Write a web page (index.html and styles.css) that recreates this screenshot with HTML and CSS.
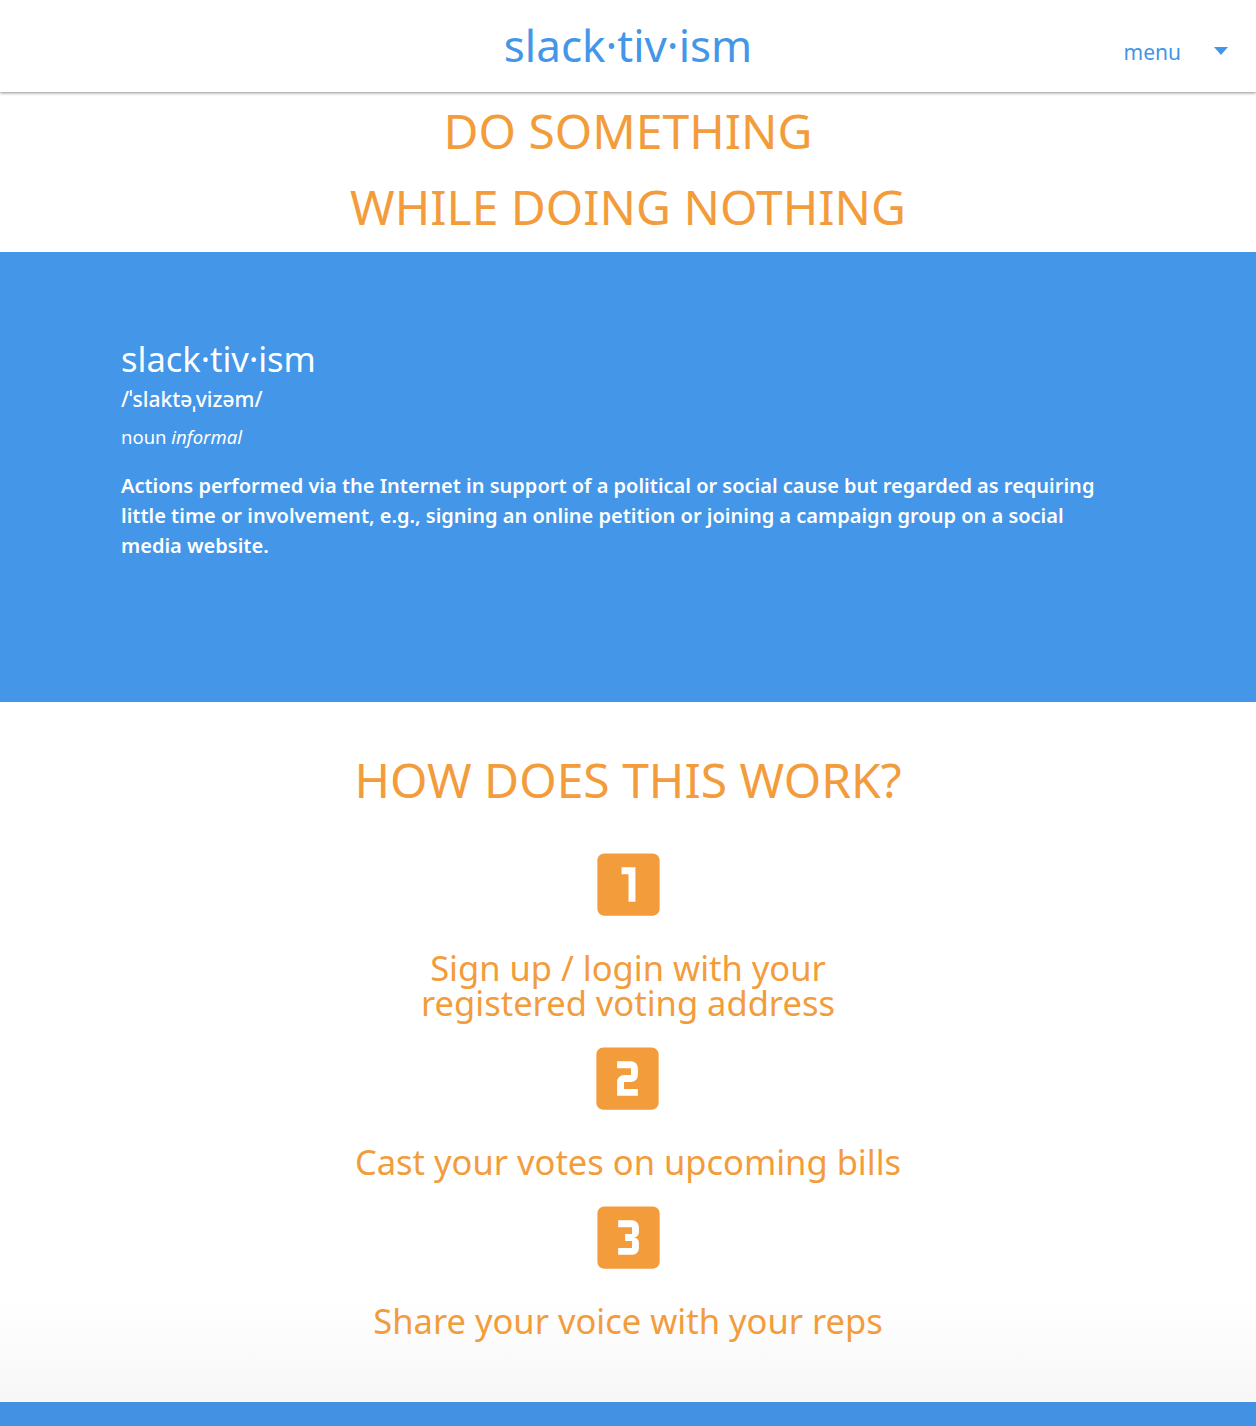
FILE: index.html
```html
<!DOCTYPE html>
<html lang="en">
<head>
<meta charset="utf-8">
<title>slacktivism</title>
<link rel="stylesheet" href="styles.css">
</head>
<body>
<header class="topbar">
  <div class="topbar-spacer"></div>
  <div class="logo">slack·tiv·ism</div>
  <div class="menu">
    <span class="menu-label">menu</span>
    <svg class="menu-caret" width="14" height="8" viewBox="0 0 14 8"><path d="M0 0h14L7 8z" fill="#4396e8"/></svg>
  </div>
</header>

<section class="hero">
  <h1 class="hero-title">DO SOMETHING<br>WHILE DOING NOTHING</h1>
</section>

<section class="definition">
  <div class="definition-inner">
    <h2 class="def-word">slack·tiv·ism</h2>
    <p class="def-pron">/ˈslaktəˌvizəm/</p>
    <p class="def-pos">noun <em>informal</em></p>
    <p class="def-text">Actions performed via the Internet in support of a political or social cause but regarded as requiring little time or involvement, e.g., signing an online petition or joining a campaign group on a social media website.</p>
  </div>
</section>

<section class="how">
  <h2 class="how-title">HOW DOES THIS WORK?</h2>
  <div class="step">
    <svg class="step-icon" viewBox="0 0 24 24"><path fill="#f39c3b" d="M19 3H5c-1.1 0-2 .9-2 2v14c0 1.1.9 2 2 2h14c1.1 0 2-.9 2-2V5c0-1.1-.9-2-2-2zm-5 14h-2V9h-2V7h4v10z"/></svg>
    <p class="step-text">Sign up / login with your<br>registered voting address</p>
  </div>
  <div class="step">
    <svg class="step-icon" viewBox="0 0 24 24"><path fill="#f39c3b" d="M19 3H5c-1.1 0-2 .9-2 2v14c0 1.1.9 2 2 2h14c1.1 0 2-.9 2-2V5c0-1.1-.9-2-2-2zm-4 8c0 1.11-.9 2-2 2h-2v2h4v2H9v-4c0-1.110.9-2 2-2h2V9H9V7h4c1.1 0 2 .89 2 2v2z"/></svg>
    <p class="step-text">Cast your votes on upcoming bills</p>
  </div>
  <div class="step">
    <svg class="step-icon" viewBox="0 0 24 24"><path fill="#f39c3b" d="M19.01 3h-14c-1.1 0-2 .9-2 2v14c0 1.1.9 2 2 2h14c1.1 0 2-.9 2-2V5c0-1.1-.9-2-2-2zm-4 7.5c0 .83-.67 1.5-1.5 1.5.83 0 1.5.67 1.5 1.5V15c0 1.11-.9 2-2 2h-4v-2h4v-2h-2v-2h2V9h-4V7h4c1.1 0 2 .89 2 2v1.5z"/></svg>
    <p class="step-text">Share your voice with your reps</p>
  </div>
</section>

<footer class="footer"></footer>
</body>
</html>
```

FILE: styles.css
```css
* { box-sizing: border-box; }
html, body { margin: 0; padding: 0; }
body {
  font-family: "Noto Sans", "Open Sans", "DejaVu Sans", sans-serif;
  background: #fff;
}
.topbar {
  position: relative;
  z-index: 2;
  height: 92px;
  display: grid;
  grid-template-columns: 1fr auto 1fr;
  align-items: center;
  background: #fff;
  box-shadow: 0 1px 3px rgba(0,0,0,0.45);
}
.logo {
  font-size: 44px;
  color: #4396e8;
  line-height: 1;
  padding-bottom: 2px;
}
.menu {
  justify-self: end;
  display: flex;
  align-items: center;
  gap: 33px;
  padding-right: 28px;
  padding-top: 12px;
}
.menu-label {
  font-size: 21px;
  color: #4396e8;
}
.menu-caret { display: block; margin-top: -2px; }
.hero {
  text-align: center;
  padding: 1px 0 7px;
}
.hero-title {
  margin: 0;
  font-size: 48px;
  font-weight: 400;
  line-height: 76px;
  color: #f39c3b;
}
.definition {
  background: #4396e8;
  height: 450px;
  color: #fff;
  padding: 85px 121px 0;
}
.definition-inner {
  max-width: 1000px;
}
.def-word {
  margin: 0;
  font-size: 34.5px;
  font-weight: 400;
  line-height: 44px;
}
.def-pron {
  margin: 4px 0 0;
  font-size: 21px;
  line-height: 28px;
  font-weight: 500;
}
.def-pos {
  margin: 12px 0 0;
  font-size: 18.5px;
  line-height: 24px;
}
.def-text {
  margin: 22px 0 0;
  font-size: 20px;
  line-height: 30px;
  font-weight: 600;
}
.how {
  background: linear-gradient(#fff 85%, #f7f7f7);
  text-align: center;
  padding: 46px 0 64px;
  display: flex;
  flex-direction: column;
  align-items: center;
}
.how-title {
  margin: 0 0 31px;
  font-size: 48px;
  font-weight: 400;
  line-height: 64px;
  color: #f39c3b;
}
.step {
  display: flex;
  flex-direction: column;
  align-items: center;
}
.step + .step { margin-top: 17px; }
.step-icon {
  display: block;
  width: 83px;
  height: 83px;
}
.step-text {
  margin: 24px 0 0;
  font-size: 34.5px;
  line-height: 35px;
  color: #f39c3b;
}
.footer {
  background: #4291e3;
  height: 120px;
}
```
